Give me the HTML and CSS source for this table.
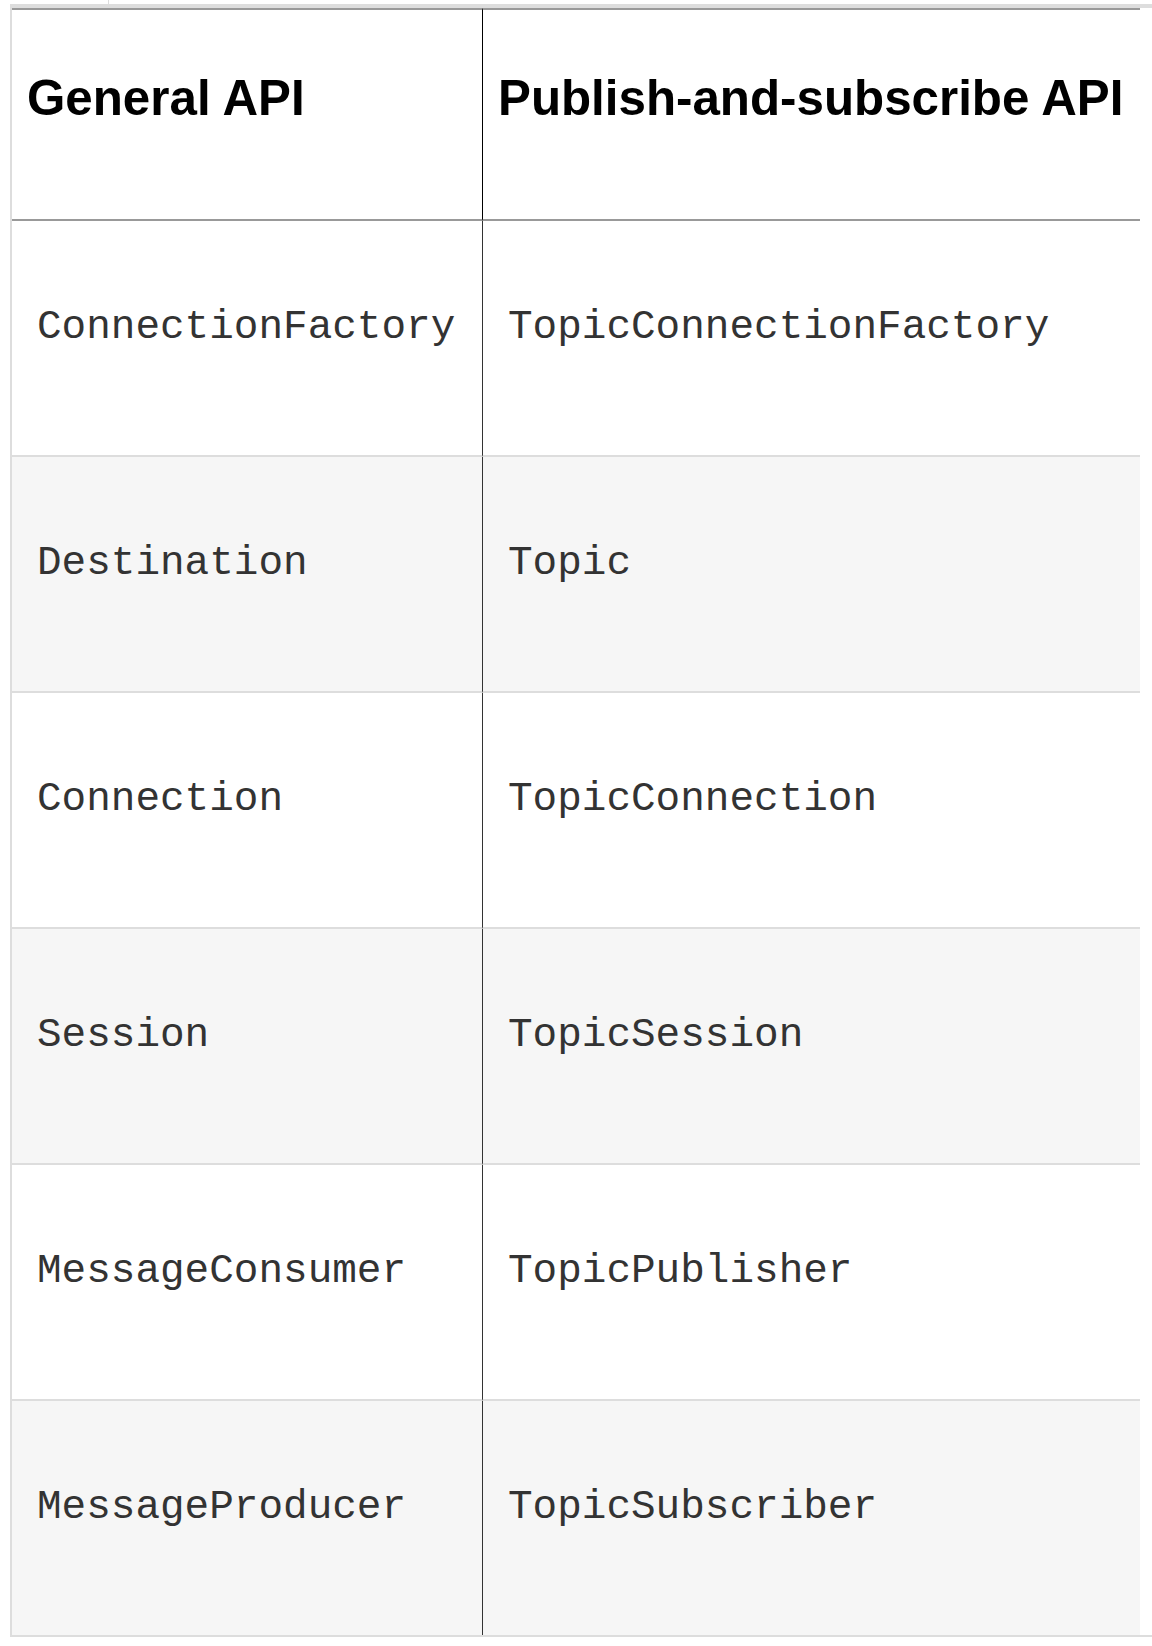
FILE: index.html
```html
<!DOCTYPE html>
<html lang="en">
<head>
<meta charset="utf-8">
<title>General API vs Publish-and-subscribe API</title>
<link rel="stylesheet" href="styles.css">
</head>
<body>
<div class="stub"></div>
<div class="wrap">
  <table class="api">
    <colgroup>
      <col class="c1">
      <col class="c2">
    </colgroup>
    <thead>
      <tr>
        <th class="first">General API</th>
        <th>Publish-and-subscribe API</th>
      </tr>
    </thead>
    <tbody>
      <tr>
        <td class="first"><code>ConnectionFactory</code></td>
        <td><code>TopicConnectionFactory</code></td>
      </tr>
      <tr class="alt">
        <td class="first"><code>Destination</code></td>
        <td><code>Topic</code></td>
      </tr>
      <tr>
        <td class="first"><code>Connection</code></td>
        <td><code>TopicConnection</code></td>
      </tr>
      <tr class="alt">
        <td class="first"><code>Session</code></td>
        <td><code>TopicSession</code></td>
      </tr>
      <tr>
        <td class="first"><code>MessageConsumer</code></td>
        <td><code>TopicPublisher</code></td>
      </tr>
      <tr class="alt last">
        <td class="first"><code>MessageProducer</code></td>
        <td><code>TopicSubscriber</code></td>
      </tr>
    </tbody>
  </table>
</div>
</body>
</html>
```

FILE: styles.css
```css
html, body {
  margin: 0;
  padding: 0;
  background: #ffffff;
}

body {
  font-family: "Liberation Sans", Arial, sans-serif;
  color: #000;
}

.stub {
  width: 1px;
  height: 4px;
  margin-left: 108px;
  background: #dddddd;
}

.wrap {
  margin-left: 10px;
  width: 1140px;
  border-top: 4px solid #dddddd;
  border-left: 2px solid #dddddd;
  border-bottom: 2px solid #dddddd;
}

.api {
  table-layout: fixed;
  width: 1128px;
  border-collapse: separate;
  border-spacing: 0;
}

.api col.c1 { width: 471px; }
.api col.c2 { width: 657px; }

.api th {
  text-align: left;
  vertical-align: top;
  font-family: "Liberation Sans", Arial, sans-serif;
  font-weight: 700;
  font-size: 49.3px;
  line-height: 56px;
  color: #000;
  padding: 60px 4px 93px 15px;
  border-top: 2px solid #999999;
  border-bottom: 2px solid #999999;
  white-space: nowrap;
}

.api th.first {
  border-right: 1px solid #000000;
}

.api td {
  vertical-align: top;
  padding: 83px 8px 105px 25px;
  border-bottom: 2px solid #dddddd;
  background: #ffffff;
}

.api td.first {
  border-right: 1px solid #333333;
}

.api tr.alt td {
  background: #f6f6f6;
}

.api tr.last td {
  border-bottom: 0;
}

.api code {
  font-family: "Liberation Mono", "Courier New", monospace;
  font-size: 41px;
  line-height: 46px;
  color: #333333;
  white-space: nowrap;
}
```
